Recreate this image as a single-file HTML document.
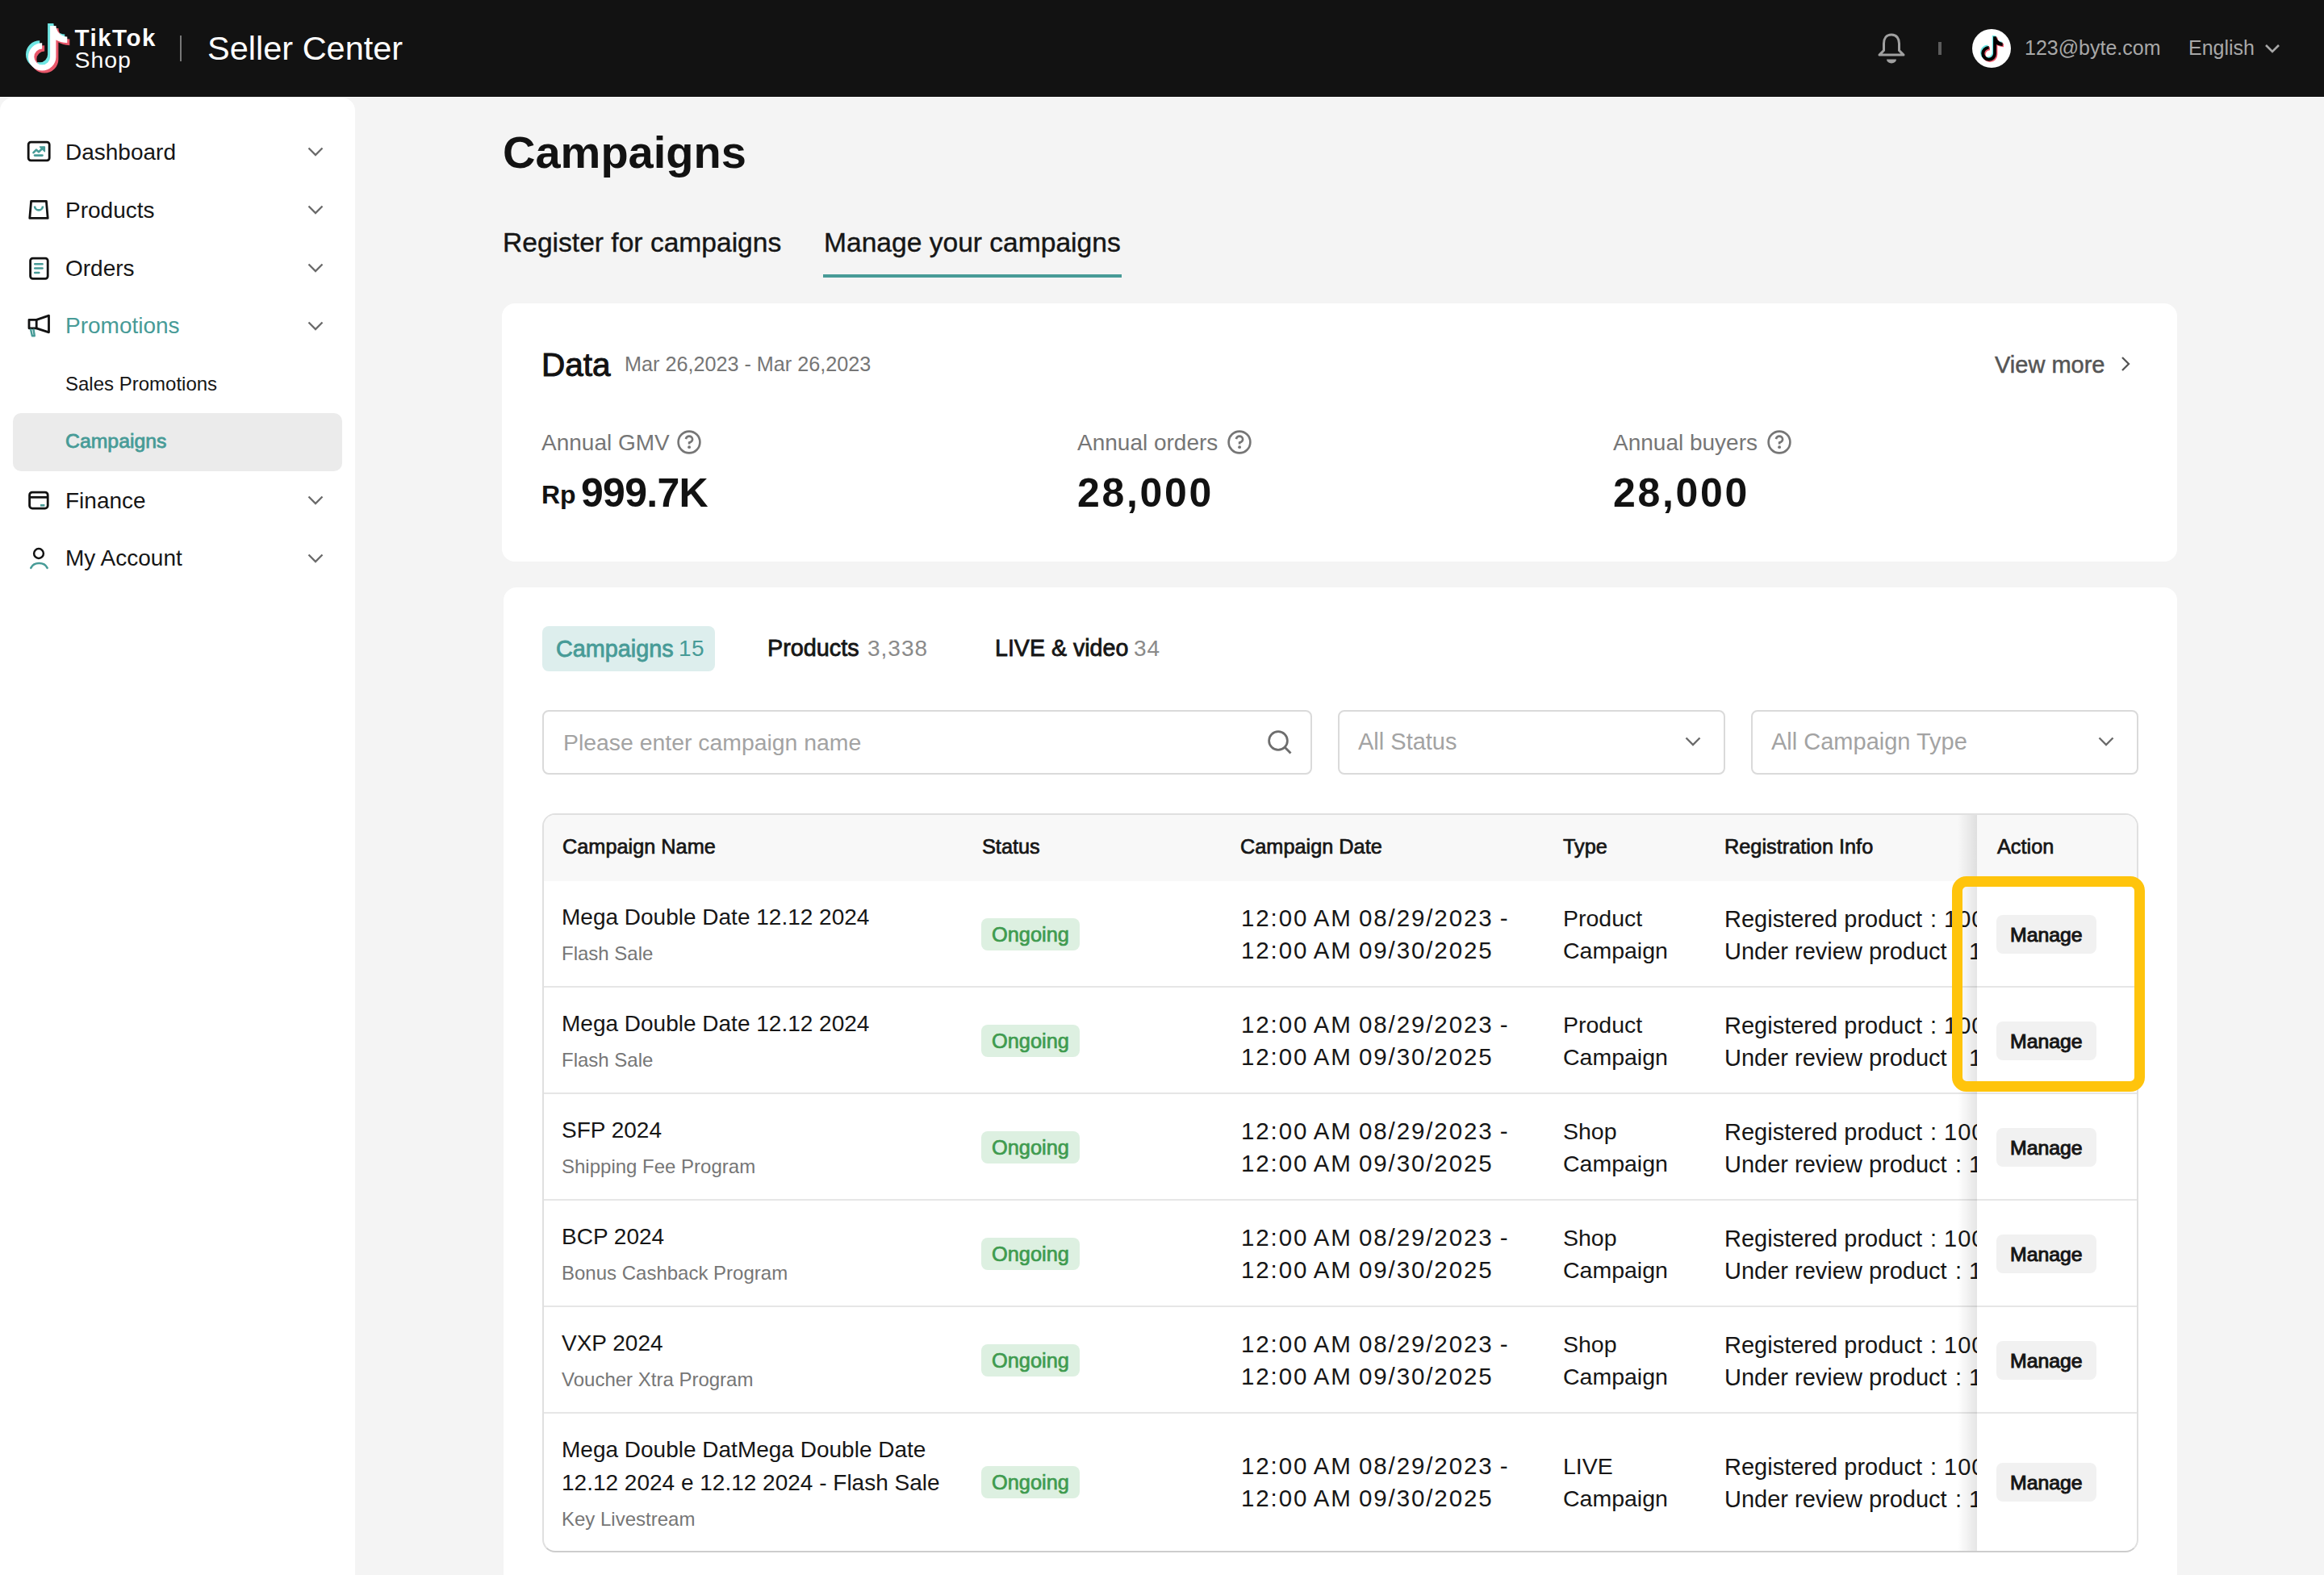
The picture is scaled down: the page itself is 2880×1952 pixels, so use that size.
<!DOCTYPE html>
<html><head><meta charset="utf-8">
<style>
*{margin:0;padding:0;box-sizing:border-box}
html,body{width:2880px;height:1952px;overflow:hidden;background:#f4f4f4;font-family:"Liberation Sans",sans-serif;color:#161616}
.a{position:absolute}
.t{position:absolute;line-height:1;white-space:nowrap}
.b{font-weight:bold}
.chev{position:absolute;width:20px;height:12px}
.teal{color:#479b97}
.card{position:absolute;background:#fff;border-radius:16px}
.grey{color:#767676}
.qc{position:absolute;width:30px;height:30px}
.k{color:#161616}
.m{-webkit-text-stroke-width:0.7px}
.sb{-webkit-text-stroke-width:1px}
</style></head><body>
<div class="a" style="left:0;top:0;width:2880px;height:120px;background:#121212">
<svg class="a" style="left:29px;top:26px" width="60" height="68" viewBox="-6 -6 60 68"><path fill="#6fe6e3" transform="translate(-3,-3)" d="M27.1 0H34.4C34.4 6.5 40.5 13.5 48.3 13.5V21.2C42.5 21.2 37.5 19.5 34.4 17.6V38.4A17.2 17.2 0 1 1 17.2 21.2V28.5A9.9 9.9 0 1 0 27.1 38.4Z"/><path fill="#e8576a" transform="translate(3,3)" d="M27.1 0H34.4C34.4 6.5 40.5 13.5 48.3 13.5V21.2C42.5 21.2 37.5 19.5 34.4 17.6V38.4A17.2 17.2 0 1 1 17.2 21.2V28.5A9.9 9.9 0 1 0 27.1 38.4Z"/><path fill="#fff" d="M27.1 0H34.4C34.4 6.5 40.5 13.5 48.3 13.5V21.2C42.5 21.2 37.5 19.5 34.4 17.6V38.4A17.2 17.2 0 1 1 17.2 21.2V28.5A9.9 9.9 0 1 0 27.1 38.4Z"/></svg>
<div class="t b" style="left:92.5px;top:calc(57.2px - 0.8467em);font-size:29.5px;color:#fff;letter-spacing:1.5px">TikTok</div>
<div class="t " style="left:92.5px;top:calc(83.8px - 0.8467em);font-size:28.5px;color:#fff;letter-spacing:0.9px">Shop</div>
<div class="a" style="left:223px;top:44px;width:2px;height:32px;background:#777"></div>
<div class="t " style="left:257px;top:calc(74.2px - 0.8467em);font-size:41.5px;color:#fff">Seller Center</div>
<svg class="a" style="left:2325px;top:40px" width="38" height="40" viewBox="0 0 38 40"><path d="M19 3.1C12.5 3.1 9.5 8 9.5 14V22.5L4 28.1H34L28.5 22.5V14C28.5 8 25.5 3.1 19 3.1Z" fill="none" stroke="#a0a0a0" stroke-width="3" stroke-linejoin="round"/><path d="M13 33.5H25A6 5 0 0 1 13 33.5Z" fill="#a0a0a0"/></svg>
<div class="a" style="left:2402px;top:52px;width:4px;height:16px;background:#5c5c5c"></div>
<div class="a" style="left:2444px;top:36px;width:48px;height:48px;border-radius:50%;background:#fff"></div>
<svg class="a" style="left:2451.7px;top:41.7px" width="32.8" height="37.2" viewBox="-6 -6 60 68"><path fill="#6fe6e3" transform="translate(-2.4,-2.4)" d="M27.1 0H34.4C34.4 6.5 40.5 13.5 48.3 13.5V21.2C42.5 21.2 37.5 19.5 34.4 17.6V38.4A17.2 17.2 0 1 1 17.2 21.2V28.5A9.9 9.9 0 1 0 27.1 38.4Z"/><path fill="#e8576a" transform="translate(2.4,2.4)" d="M27.1 0H34.4C34.4 6.5 40.5 13.5 48.3 13.5V21.2C42.5 21.2 37.5 19.5 34.4 17.6V38.4A17.2 17.2 0 1 1 17.2 21.2V28.5A9.9 9.9 0 1 0 27.1 38.4Z"/><path fill="#000" d="M27.1 0H34.4C34.4 6.5 40.5 13.5 48.3 13.5V21.2C42.5 21.2 37.5 19.5 34.4 17.6V38.4A17.2 17.2 0 1 1 17.2 21.2V28.5A9.9 9.9 0 1 0 27.1 38.4Z"/></svg>
<div class="t " style="left:2509px;top:calc(68.3px - 0.8467em);font-size:25px;color:#a8a8a8">123@byte.com</div>
<div class="t " style="left:2712px;top:calc(68.3px - 0.8467em);font-size:25px;color:#a8a8a8">English</div>
<svg class="chev" style="left:2806px;top:54px" viewBox="0 0 20 12"><path d="M2 2L10 10L18 2" fill="none" stroke="#a8a8a8" stroke-width="2.6"/></svg>
</div>
<div class="a" style="left:0;top:120px;width:2880px;height:1px;background:#fff"></div>
<div class="a" style="left:0;top:121px;width:440px;height:1831px;background:#fff;border-radius:16px 16px 0 0"></div>
<svg class="a" style="left:32px;top:173px" width="32" height="30" viewBox="0 0 32 30"><rect x="3.2" y="3.2" width="26" height="22.6" rx="3" fill="none" stroke="#121212" stroke-width="2.8"/><path d="M9.5 16.2L13 12.6L16 15.4L21.5 10" fill="none" stroke="#479b97" stroke-width="2.6" stroke-linecap="round" stroke-linejoin="round"/><path d="M17.5 9H23.4V14.8Z" fill="#479b97" stroke="#479b97" stroke-width="1.4" stroke-linejoin="round"/><path d="M11 19.6H20.5" stroke="#479b97" stroke-width="2.6" stroke-linecap="round"/></svg>
<div class="t k" style="left:81px;top:calc(198.3px - 0.8467em);font-size:28px;">Dashboard</div>
<svg class="a" style="left:33px;top:245px" width="30" height="30" viewBox="0 0 30 30"><path d="M5.6 4.4H24.4L26.2 25.4H3.8Z" fill="none" stroke="#121212" stroke-width="2.8" stroke-linejoin="round"/><path d="M10 10.4A5 5 0 0 0 20 10.4" fill="none" stroke="#479b97" stroke-width="2.6"/></svg>
<div class="t k" style="left:81px;top:calc(270.3px - 0.8467em);font-size:28px;">Products</div>
<svg class="a" style="left:33px;top:316px" width="30" height="32" viewBox="0 0 30 32"><rect x="4.6" y="4.1" width="21.6" height="25.2" rx="3" fill="none" stroke="#121212" stroke-width="2.8"/><path d="M10.2 11.3H19.6M10.2 16.5H19.6M10.2 22H15.4" stroke="#479b97" stroke-width="2.5" stroke-linecap="round"/></svg>
<div class="t k" style="left:81px;top:calc(342.3px - 0.8467em);font-size:28px;">Orders</div>
<svg class="a" style="left:32px;top:388px" width="32" height="32" viewBox="0 0 32 32"><path d="M4 8.3H13.2V18.8H4Z" fill="none" stroke="#121212" stroke-width="2.8" stroke-linejoin="round"/><path d="M13.2 8.3L28.5 3.2V23.8L13.2 18.8" fill="none" stroke="#121212" stroke-width="2.8" stroke-linejoin="round"/><path d="M5.9 19.5L7.9 28.3H10.8L9.4 19.5" fill="none" stroke="#479b97" stroke-width="2.4" stroke-linejoin="round"/></svg>
<div class="t teal" style="left:81px;top:calc(414.2px - 0.8467em);font-size:28px;">Promotions</div>
<div class="t k" style="left:81px;top:calc(484.6px - 0.8467em);font-size:24px;">Sales Promotions</div>
<div class="a" style="left:16px;top:512px;width:408px;height:72px;border-radius:10px;background:#ebebeb"></div>
<div class="t m teal" style="left:81px;top:calc(555.9px - 0.8467em);font-size:24.8px;-webkit-text-stroke-width:0.8px">Campaigns</div>
<svg class="a" style="left:33px;top:606px" width="30" height="28" viewBox="0 0 30 28"><rect x="3.6" y="4.1" width="22.6" height="20" rx="3.4" fill="none" stroke="#121212" stroke-width="2.8"/><path d="M3.6 10.3H26.2" stroke="#121212" stroke-width="2.8"/><path d="M17 20.3H22.4" stroke="#479b97" stroke-width="2.6"/></svg>
<div class="t k" style="left:81px;top:calc(630.4px - 0.8467em);font-size:28px;">Finance</div>
<svg class="a" style="left:33px;top:676px" width="30" height="32" viewBox="0 0 30 32"><circle cx="15" cy="10" r="5.9" fill="none" stroke="#121212" stroke-width="2.5"/><path d="M5.3 27.8A11.2 10 0 0 1 25.6 27.8" fill="none" stroke="#479b97" stroke-width="2.6" stroke-linecap="round"/></svg>
<div class="t k" style="left:81px;top:calc(702.2px - 0.8467em);font-size:28px;">My Account</div>
<svg class="chev" style="left:381px;top:182px" viewBox="0 0 20 12"><path d="M1.5 1.5L10 10L18.5 1.5" fill="none" stroke="#6b6b6b" stroke-width="2.4"/></svg>
<svg class="chev" style="left:381px;top:254px" viewBox="0 0 20 12"><path d="M1.5 1.5L10 10L18.5 1.5" fill="none" stroke="#6b6b6b" stroke-width="2.4"/></svg>
<svg class="chev" style="left:381px;top:326px" viewBox="0 0 20 12"><path d="M1.5 1.5L10 10L18.5 1.5" fill="none" stroke="#6b6b6b" stroke-width="2.4"/></svg>
<svg class="chev" style="left:381px;top:398px" viewBox="0 0 20 12"><path d="M1.5 1.5L10 10L18.5 1.5" fill="none" stroke="#6b6b6b" stroke-width="2.4"/></svg>
<svg class="chev" style="left:381px;top:614px" viewBox="0 0 20 12"><path d="M1.5 1.5L10 10L18.5 1.5" fill="none" stroke="#6b6b6b" stroke-width="2.4"/></svg>
<svg class="chev" style="left:381px;top:686px" viewBox="0 0 20 12"><path d="M1.5 1.5L10 10L18.5 1.5" fill="none" stroke="#6b6b6b" stroke-width="2.4"/></svg>
<div class="t b" style="left:623px;top:calc(208.7px - 0.8467em);font-size:56px;color:#121212">Campaigns</div>
<div class="t k" style="left:623px;top:calc(312.7px - 0.8467em);font-size:33.6px;-webkit-text-stroke-width:0.4px">Register for campaigns</div>
<div class="t k" style="left:1021px;top:calc(312.7px - 0.8467em);font-size:33.6px;-webkit-text-stroke-width:0.4px">Manage your campaigns</div>
<div class="a" style="left:1020px;top:340px;width:370px;height:4px;background:#479b97"></div>
<div class="card" style="left:622px;top:376px;width:2076px;height:320px"></div>
<div class="t sb" style="left:671px;top:calc(466.6px - 0.8467em);font-size:40.5px;color:#121212">Data</div>
<div class="t grey" style="left:774px;top:calc(460.5px - 0.8467em);font-size:25.2px;">Mar 26,2023 - Mar 26,2023</div>
<div class="t m" style="left:2472px;top:calc(462.3px - 0.8467em);font-size:29px;color:#555;-webkit-text-stroke-width:0.5px">View more</div>
<svg class="a" style="left:2626px;top:440px" width="16" height="22" viewBox="0 0 16 22"><path d="M4 3L12 11L4 19" fill="none" stroke="#555" stroke-width="2.3"/></svg>
<div class="t grey" style="left:671px;top:calc(558.5px - 0.8467em);font-size:28px;">Annual GMV</div>
<svg class="qc" style="left:839px;top:533px" viewBox="0 0 30 30"><circle cx="15" cy="15" r="13.4" fill="none" stroke="#767676" stroke-width="2.6"/><path d="M10.9 11.1C11.4 8.9 13 7.6 15 7.6C17.4 7.6 19.1 9.3 19.1 11.4C19.1 13.5 17.6 14.8 15.1 15.5V17.4" fill="none" stroke="#767676" stroke-width="2.6"/><circle cx="15.1" cy="21.2" r="1.9" fill="#767676"/></svg>
<div class="t grey" style="left:1335px;top:calc(558.5px - 0.8467em);font-size:28px;">Annual orders</div>
<svg class="qc" style="left:1521px;top:533px" viewBox="0 0 30 30"><circle cx="15" cy="15" r="13.4" fill="none" stroke="#767676" stroke-width="2.6"/><path d="M10.9 11.1C11.4 8.9 13 7.6 15 7.6C17.4 7.6 19.1 9.3 19.1 11.4C19.1 13.5 17.6 14.8 15.1 15.5V17.4" fill="none" stroke="#767676" stroke-width="2.6"/><circle cx="15.1" cy="21.2" r="1.9" fill="#767676"/></svg>
<div class="t grey" style="left:1999px;top:calc(558.5px - 0.8467em);font-size:28px;">Annual buyers</div>
<svg class="qc" style="left:2190px;top:533px" viewBox="0 0 30 30"><circle cx="15" cy="15" r="13.4" fill="none" stroke="#767676" stroke-width="2.6"/><path d="M10.9 11.1C11.4 8.9 13 7.6 15 7.6C17.4 7.6 19.1 9.3 19.1 11.4C19.1 13.5 17.6 14.8 15.1 15.5V17.4" fill="none" stroke="#767676" stroke-width="2.6"/><circle cx="15.1" cy="21.2" r="1.9" fill="#767676"/></svg>
<div class="t b" style="left:671px;top:calc(623.7px - 0.8467em);font-size:32px;color:#121212">Rp</div>
<div class="t b" style="left:720px;top:calc(628px - 0.8467em);font-size:50px;color:#121212;letter-spacing:-0.7px">999.7K</div>
<div class="t b" style="left:1335px;top:calc(628px - 0.8467em);font-size:50px;color:#121212;letter-spacing:2.7px">28,000</div>
<div class="t b" style="left:1999px;top:calc(628px - 0.8467em);font-size:50px;color:#121212;letter-spacing:2.7px">28,000</div>
<div class="card" style="left:624px;top:728px;width:2074px;height:1300px"></div>
<div class="a" style="left:672px;top:776px;width:214px;height:56px;border-radius:8px;background:#ddeeed"></div>
<div class="t m teal" style="left:689px;top:calc(814px - 0.8467em);font-size:28.8px;-webkit-text-stroke-width:0.8px">Campaigns</div>
<div class="t teal" style="left:841px;top:calc(814px - 0.8467em);font-size:28px;letter-spacing:0.5px">15</div>
<div class="t m k" style="left:951px;top:calc(813.6px - 0.8467em);font-size:28.8px;-webkit-text-stroke-width:0.8px">Products</div>
<div class="t " style="left:1075px;top:calc(813.6px - 0.8467em);font-size:28px;color:#8a8a8a;letter-spacing:1px">3,338</div>
<div class="t m k" style="left:1233px;top:calc(813.6px - 0.8467em);font-size:28.6px;-webkit-text-stroke-width:0.8px">LIVE &amp; video</div>
<div class="t " style="left:1405px;top:calc(813.6px - 0.8467em);font-size:28px;color:#8a8a8a;letter-spacing:1px">34</div>
<div class="a" style="left:672px;top:880px;width:954px;height:80px;border:2px solid #dadada;border-radius:8px"></div>
<div class="a" style="left:1658px;top:880px;width:480px;height:80px;border:2px solid #dadada;border-radius:8px"></div>
<div class="a" style="left:2170px;top:880px;width:480px;height:80px;border:2px solid #dadada;border-radius:8px"></div>
<div class="t " style="left:698px;top:calc(929.7px - 0.8467em);font-size:28.4px;color:#a3a3a3">Please enter campaign name</div>
<svg class="a" style="left:1568px;top:902px" width="36" height="36" viewBox="0 0 36 36"><circle cx="16" cy="16" r="11.4" fill="none" stroke="#6d6d6d" stroke-width="2.7"/><path d="M24.3 24.3L31.5 31.5" stroke="#6d6d6d" stroke-width="2.9"/></svg>
<div class="t " style="left:1683px;top:calc(929.7px - 0.8467em);font-size:29px;color:#a3a3a3">All Status</div>
<div class="t " style="left:2195px;top:calc(929.7px - 0.8467em);font-size:29px;color:#a3a3a3">All Campaign Type</div>
<svg class="chev" style="left:2088px;top:913px" viewBox="0 0 20 12"><path d="M1.5 1.5L10 10L18.5 1.5" fill="none" stroke="#6b6b6b" stroke-width="2.4"/></svg>
<svg class="chev" style="left:2600px;top:913px" viewBox="0 0 20 12"><path d="M1.5 1.5L10 10L18.5 1.5" fill="none" stroke="#6b6b6b" stroke-width="2.4"/></svg>
<div class="a" style="left:672px;top:1008px;width:1978px;height:916px;border:2px solid #e0e0e0;border-bottom-color:#cdcdcd;border-radius:16px;overflow:hidden;background:#fff">
<div class="a" style="left:0;top:0;width:1974px;height:82px;background:#f8f8f8"></div>
<div class="a" style="left:0;top:212px;width:1974px;height:2px;background:#e6e6e6"></div>
<div class="a" style="left:0;top:344px;width:1974px;height:2px;background:#e6e6e6"></div>
<div class="a" style="left:0;top:476px;width:1974px;height:2px;background:#e6e6e6"></div>
<div class="a" style="left:0;top:608px;width:1974px;height:2px;background:#e6e6e6"></div>
<div class="a" style="left:0;top:740px;width:1974px;height:2px;background:#e6e6e6"></div>
</div>
<div class="t m k" style="left:697px;top:calc(1058.2px - 0.8467em);font-size:25.3px;">Campaign Name</div>
<div class="t m k" style="left:1217px;top:calc(1058.2px - 0.8467em);font-size:25.3px;">Status</div>
<div class="t m k" style="left:1537px;top:calc(1058.2px - 0.8467em);font-size:25.3px;">Campaign Date</div>
<div class="t m k" style="left:1937px;top:calc(1058.2px - 0.8467em);font-size:25.3px;">Type</div>
<div class="t m k" style="left:2137px;top:calc(1058.2px - 0.8467em);font-size:25.3px;">Registration Info</div>
<div class="t m k" style="left:2475px;top:calc(1058.2px - 0.8467em);font-size:25.3px;">Action</div>
<div class="t k" style="left:696px;top:calc(1147px - 0.8467em);font-size:28px;">Mega Double Date 12.12 2024</div>
<div class="t grey" style="left:696px;top:calc(1190px - 0.8467em);font-size:24px;">Flash Sale</div>
<div class="a" style="left:1216px;top:1138.0px;width:122px;height:40px;border-radius:8px;background:#ddf0e1"></div>
<div class="t m" style="left:1229px;top:calc(1167.8px - 0.8467em);font-size:25.4px;color:#3f9b4f">Ongoing</div>
<div class="t k" style="left:1538px;top:calc(1148.0px - 0.8467em);font-size:29.5px;letter-spacing:1.9px;word-spacing:-2px">12:00 AM 08/29/2023 -</div>
<div class="t k" style="left:1538px;top:calc(1188.0px - 0.8467em);font-size:29.5px;letter-spacing:1.9px;word-spacing:-2px">12:00 AM 09/30/2025</div>
<div class="t k" style="left:1937px;top:calc(1148.0px - 0.8467em);font-size:28.5px;">Product</div>
<div class="t k" style="left:1937px;top:calc(1188.0px - 0.8467em);font-size:28.5px;">Campaign</div>
<div class="a" style="left:2474px;top:1134.0px;width:124px;height:48px;border-radius:8px;background:#f1f1f1"></div>
<div class="t sb k" style="left:2491px;top:calc(1167.5px - 0.8467em);font-size:24.8px;">Manage</div>
<div class="t k" style="left:696px;top:calc(1279px - 0.8467em);font-size:28px;">Mega Double Date 12.12 2024</div>
<div class="t grey" style="left:696px;top:calc(1322px - 0.8467em);font-size:24px;">Flash Sale</div>
<div class="a" style="left:1216px;top:1270.0px;width:122px;height:40px;border-radius:8px;background:#ddf0e1"></div>
<div class="t m" style="left:1229px;top:calc(1299.8px - 0.8467em);font-size:25.4px;color:#3f9b4f">Ongoing</div>
<div class="t k" style="left:1538px;top:calc(1280.0px - 0.8467em);font-size:29.5px;letter-spacing:1.9px;word-spacing:-2px">12:00 AM 08/29/2023 -</div>
<div class="t k" style="left:1538px;top:calc(1320.0px - 0.8467em);font-size:29.5px;letter-spacing:1.9px;word-spacing:-2px">12:00 AM 09/30/2025</div>
<div class="t k" style="left:1937px;top:calc(1280.0px - 0.8467em);font-size:28.5px;">Product</div>
<div class="t k" style="left:1937px;top:calc(1320.0px - 0.8467em);font-size:28.5px;">Campaign</div>
<div class="a" style="left:2474px;top:1266.0px;width:124px;height:48px;border-radius:8px;background:#f1f1f1"></div>
<div class="t sb k" style="left:2491px;top:calc(1299.5px - 0.8467em);font-size:24.8px;">Manage</div>
<div class="t k" style="left:696px;top:calc(1411px - 0.8467em);font-size:28px;">SFP 2024</div>
<div class="t grey" style="left:696px;top:calc(1454px - 0.8467em);font-size:24px;">Shipping Fee Program</div>
<div class="a" style="left:1216px;top:1402.0px;width:122px;height:40px;border-radius:8px;background:#ddf0e1"></div>
<div class="t m" style="left:1229px;top:calc(1431.8px - 0.8467em);font-size:25.4px;color:#3f9b4f">Ongoing</div>
<div class="t k" style="left:1538px;top:calc(1412.0px - 0.8467em);font-size:29.5px;letter-spacing:1.9px;word-spacing:-2px">12:00 AM 08/29/2023 -</div>
<div class="t k" style="left:1538px;top:calc(1452.0px - 0.8467em);font-size:29.5px;letter-spacing:1.9px;word-spacing:-2px">12:00 AM 09/30/2025</div>
<div class="t k" style="left:1937px;top:calc(1412.0px - 0.8467em);font-size:28.5px;">Shop</div>
<div class="t k" style="left:1937px;top:calc(1452.0px - 0.8467em);font-size:28.5px;">Campaign</div>
<div class="a" style="left:2474px;top:1398.0px;width:124px;height:48px;border-radius:8px;background:#f1f1f1"></div>
<div class="t sb k" style="left:2491px;top:calc(1431.5px - 0.8467em);font-size:24.8px;">Manage</div>
<div class="t k" style="left:696px;top:calc(1543px - 0.8467em);font-size:28px;">BCP 2024</div>
<div class="t grey" style="left:696px;top:calc(1586px - 0.8467em);font-size:24px;">Bonus Cashback Program</div>
<div class="a" style="left:1216px;top:1534.0px;width:122px;height:40px;border-radius:8px;background:#ddf0e1"></div>
<div class="t m" style="left:1229px;top:calc(1563.8px - 0.8467em);font-size:25.4px;color:#3f9b4f">Ongoing</div>
<div class="t k" style="left:1538px;top:calc(1544.0px - 0.8467em);font-size:29.5px;letter-spacing:1.9px;word-spacing:-2px">12:00 AM 08/29/2023 -</div>
<div class="t k" style="left:1538px;top:calc(1584.0px - 0.8467em);font-size:29.5px;letter-spacing:1.9px;word-spacing:-2px">12:00 AM 09/30/2025</div>
<div class="t k" style="left:1937px;top:calc(1544.0px - 0.8467em);font-size:28.5px;">Shop</div>
<div class="t k" style="left:1937px;top:calc(1584.0px - 0.8467em);font-size:28.5px;">Campaign</div>
<div class="a" style="left:2474px;top:1530.0px;width:124px;height:48px;border-radius:8px;background:#f1f1f1"></div>
<div class="t sb k" style="left:2491px;top:calc(1563.5px - 0.8467em);font-size:24.8px;">Manage</div>
<div class="t k" style="left:696px;top:calc(1675px - 0.8467em);font-size:28px;">VXP 2024</div>
<div class="t grey" style="left:696px;top:calc(1718px - 0.8467em);font-size:24px;">Voucher Xtra Program</div>
<div class="a" style="left:1216px;top:1666.0px;width:122px;height:40px;border-radius:8px;background:#ddf0e1"></div>
<div class="t m" style="left:1229px;top:calc(1695.8px - 0.8467em);font-size:25.4px;color:#3f9b4f">Ongoing</div>
<div class="t k" style="left:1538px;top:calc(1676.0px - 0.8467em);font-size:29.5px;letter-spacing:1.9px;word-spacing:-2px">12:00 AM 08/29/2023 -</div>
<div class="t k" style="left:1538px;top:calc(1716.0px - 0.8467em);font-size:29.5px;letter-spacing:1.9px;word-spacing:-2px">12:00 AM 09/30/2025</div>
<div class="t k" style="left:1937px;top:calc(1676.0px - 0.8467em);font-size:28.5px;">Shop</div>
<div class="t k" style="left:1937px;top:calc(1716.0px - 0.8467em);font-size:28.5px;">Campaign</div>
<div class="a" style="left:2474px;top:1662.0px;width:124px;height:48px;border-radius:8px;background:#f1f1f1"></div>
<div class="t sb k" style="left:2491px;top:calc(1695.5px - 0.8467em);font-size:24.8px;">Manage</div>
<div class="t k" style="left:696px;top:calc(1806.5px - 0.8467em);font-size:28px;">Mega Double DatMega Double Date</div>
<div class="t k" style="left:696px;top:calc(1847.5px - 0.8467em);font-size:28px;">12.12 2024 e 12.12 2024 - Flash Sale</div>
<div class="t grey" style="left:696px;top:calc(1891px - 0.8467em);font-size:24px;">Key Livestream</div>
<div class="a" style="left:1216px;top:1817.0px;width:122px;height:40px;border-radius:8px;background:#ddf0e1"></div>
<div class="t m" style="left:1229px;top:calc(1846.8px - 0.8467em);font-size:25.4px;color:#3f9b4f">Ongoing</div>
<div class="t k" style="left:1538px;top:calc(1827.0px - 0.8467em);font-size:29.5px;letter-spacing:1.9px;word-spacing:-2px">12:00 AM 08/29/2023 -</div>
<div class="t k" style="left:1538px;top:calc(1867.0px - 0.8467em);font-size:29.5px;letter-spacing:1.9px;word-spacing:-2px">12:00 AM 09/30/2025</div>
<div class="t k" style="left:1937px;top:calc(1827.0px - 0.8467em);font-size:28.5px;">LIVE</div>
<div class="t k" style="left:1937px;top:calc(1867.0px - 0.8467em);font-size:28.5px;">Campaign</div>
<div class="a" style="left:2474px;top:1813.0px;width:124px;height:48px;border-radius:8px;background:#f1f1f1"></div>
<div class="t sb k" style="left:2491px;top:calc(1846.5px - 0.8467em);font-size:24.8px;">Manage</div>
<div class="a" style="left:0;top:0;width:2450px;height:1952px;overflow:hidden">
<div class="t k" style="left:2137px;top:calc(1149.2px - 0.8467em);font-size:29px;">Registered product</div>
<div class="t k" style="left:2392px;top:calc(1149.2px - 0.8467em);font-size:29px;">:</div>
<div class="t k" style="left:2409px;top:calc(1149.2px - 0.8467em);font-size:29px;letter-spacing:1px">100</div>
<div class="t k" style="left:2137px;top:calc(1189.2px - 0.8467em);font-size:29px;">Under review product</div>
<div class="t k" style="left:2423px;top:calc(1189.2px - 0.8467em);font-size:29px;">:</div>
<div class="t k" style="left:2440px;top:calc(1189.2px - 0.8467em);font-size:29px;">1</div>
<div class="t k" style="left:2137px;top:calc(1281.2px - 0.8467em);font-size:29px;">Registered product</div>
<div class="t k" style="left:2392px;top:calc(1281.2px - 0.8467em);font-size:29px;">:</div>
<div class="t k" style="left:2409px;top:calc(1281.2px - 0.8467em);font-size:29px;letter-spacing:1px">100</div>
<div class="t k" style="left:2137px;top:calc(1321.2px - 0.8467em);font-size:29px;">Under review product</div>
<div class="t k" style="left:2423px;top:calc(1321.2px - 0.8467em);font-size:29px;">:</div>
<div class="t k" style="left:2440px;top:calc(1321.2px - 0.8467em);font-size:29px;">1</div>
<div class="t k" style="left:2137px;top:calc(1413.2px - 0.8467em);font-size:29px;">Registered product</div>
<div class="t k" style="left:2392px;top:calc(1413.2px - 0.8467em);font-size:29px;">:</div>
<div class="t k" style="left:2409px;top:calc(1413.2px - 0.8467em);font-size:29px;letter-spacing:1px">100</div>
<div class="t k" style="left:2137px;top:calc(1453.2px - 0.8467em);font-size:29px;">Under review product</div>
<div class="t k" style="left:2423px;top:calc(1453.2px - 0.8467em);font-size:29px;">:</div>
<div class="t k" style="left:2440px;top:calc(1453.2px - 0.8467em);font-size:29px;">1</div>
<div class="t k" style="left:2137px;top:calc(1545.2px - 0.8467em);font-size:29px;">Registered product</div>
<div class="t k" style="left:2392px;top:calc(1545.2px - 0.8467em);font-size:29px;">:</div>
<div class="t k" style="left:2409px;top:calc(1545.2px - 0.8467em);font-size:29px;letter-spacing:1px">100</div>
<div class="t k" style="left:2137px;top:calc(1585.2px - 0.8467em);font-size:29px;">Under review product</div>
<div class="t k" style="left:2423px;top:calc(1585.2px - 0.8467em);font-size:29px;">:</div>
<div class="t k" style="left:2440px;top:calc(1585.2px - 0.8467em);font-size:29px;">1</div>
<div class="t k" style="left:2137px;top:calc(1677.2px - 0.8467em);font-size:29px;">Registered product</div>
<div class="t k" style="left:2392px;top:calc(1677.2px - 0.8467em);font-size:29px;">:</div>
<div class="t k" style="left:2409px;top:calc(1677.2px - 0.8467em);font-size:29px;letter-spacing:1px">100</div>
<div class="t k" style="left:2137px;top:calc(1717.2px - 0.8467em);font-size:29px;">Under review product</div>
<div class="t k" style="left:2423px;top:calc(1717.2px - 0.8467em);font-size:29px;">:</div>
<div class="t k" style="left:2440px;top:calc(1717.2px - 0.8467em);font-size:29px;">1</div>
<div class="t k" style="left:2137px;top:calc(1828.2px - 0.8467em);font-size:29px;">Registered product</div>
<div class="t k" style="left:2392px;top:calc(1828.2px - 0.8467em);font-size:29px;">:</div>
<div class="t k" style="left:2409px;top:calc(1828.2px - 0.8467em);font-size:29px;letter-spacing:1px">100</div>
<div class="t k" style="left:2137px;top:calc(1868.2px - 0.8467em);font-size:29px;">Under review product</div>
<div class="t k" style="left:2423px;top:calc(1868.2px - 0.8467em);font-size:29px;">:</div>
<div class="t k" style="left:2440px;top:calc(1868.2px - 0.8467em);font-size:29px;">1</div>
</div>
<div class="a" style="left:2426px;top:1010px;width:24px;height:912px;background:linear-gradient(to right,rgba(0,0,0,0),rgba(0,0,0,0.10))"></div>
<div class="a" style="left:2419px;top:1086px;width:239px;height:267px;border:13px solid #ffc40c;border-radius:18px"></div>
</body></html>
